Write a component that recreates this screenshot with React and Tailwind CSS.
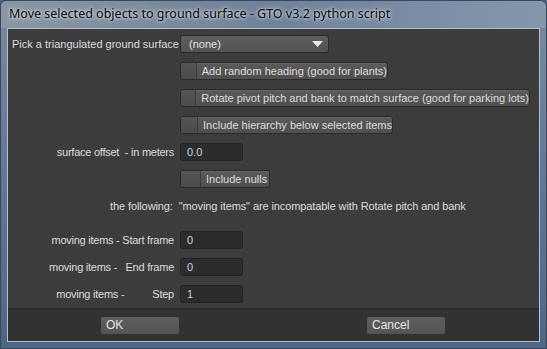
import React from "react";

const font = { fontFamily: '"Liberation Sans", Arial, sans-serif' };

function Check({ label, w }) {
  return (
    <div className={`flex h-[18px] ${w} rounded-[3px] border border-[#2a2a2a] bg-gradient-to-b from-[#5a5a5a] to-[#4f4f4f] shadow-[inset_0_1px_0_rgba(255,255,255,0.08)]`}>
      <div className="w-[20px] border-r border-[#3a3a3a] bg-gradient-to-b from-[#555] to-[#4a4a4a] rounded-l-[3px]" />
      <div className="flex items-center pl-[5px] text-[11px] text-[#dedede] leading-none whitespace-nowrap">{label}</div>
    </div>
  );
}

function Input({ value }) {
  return (
    <div className="flex items-center h-[18px] w-[63px] rounded-[3px] border border-[#222] bg-[#2c2c2c] pl-[6px] text-[11px] text-[#c9d2de] leading-none">
      {value}
    </div>
  );
}

function Label({ children }) {
  return (
    <div className="w-[166px] text-right text-[11px] tracking-[-0.25px] text-[#dcdcdc] leading-none whitespace-pre">{children}</div>
  );
}

export default function App() {
  return (
    <div className="w-[547px] h-[349px] overflow-hidden bg-[#4b6283]" style={font}>
      <div className="w-[547px] h-[349px] rounded-t-[6px] bg-gradient-to-b from-[#7a8a9d] via-[#62789a] to-[#4f6585] flex flex-col border border-[#3a4659]">
        <div className="h-[27px] shrink-0 flex items-center pl-[8px] bg-gradient-to-r from-[#8a96a4] via-[#6f8299] to-[#8597ad] rounded-t-[6px]">
          <span
            className="text-[12.5px] text-black [text-shadow:0_0_5px_rgba(255,255,255,0.9),0_0_2px_rgba(255,255,255,0.7)]"
            style={{ fontFamily: '"Noto Sans", "Liberation Sans", sans-serif' }}
          >
            Move selected objects to ground surface - GTO v3.2 python script
          </span>
        </div>
        <div className="mx-[6px] h-[314px] border border-[#b4c0ce] flex flex-col bg-[#3c3c3c]">
          <div className="flex-1 flex flex-col pt-[6px] gap-[9px]">
            <div className="flex items-center gap-[6px] h-[18px]">
              <div className="w-[166px] pl-[4px] text-[11px] text-[#dcdcdc] leading-none whitespace-nowrap">
                Pick a triangulated ground surface
              </div>
              <div className="relative flex items-center h-[18px] w-[149px] rounded-[3px] border border-[#2a2a2a] bg-gradient-to-b from-[#5e5e5e] to-[#525252] pl-[8px] text-[11px] text-[#e2e2e2] leading-none">
                (none)
                <svg className="absolute right-[5px] top-[5px]" width="11" height="7" viewBox="0 0 11 7">
                  <polygon points="0,0 11,0 5.5,6" fill="#e6e6e6" />
                </svg>
              </div>
            </div>
            <div className="flex items-center h-[18px] pl-[172px]">
              <Check label="Add random heading (good for plants)" w="w-[208px]" />
            </div>
            <div className="flex items-center h-[18px] pl-[172px]">
              <Check label="Rotate pivot pitch and bank to match surface (good for parking lots)" w="w-[350px]" />
            </div>
            <div className="flex items-center h-[18px] pl-[172px]">
              <Check label="Include hierarchy below selected items" w="w-[213px]" />
            </div>
            <div className="flex items-center gap-[6px] h-[18px]">
              <Label>{"surface offset  - in meters"}</Label>
              <Input value="0.0" />
            </div>
            <div className="flex items-center h-[18px] pl-[172px]">
              <Check label="Include nulls" w="w-[90px]" />
            </div>
            <div className="flex items-center h-[18px] pl-[102px] text-[11px] tracking-[-0.1px] text-[#dcdcdc] leading-none whitespace-pre">
              {'the following:  "moving items" are incompatable with Rotate pitch and bank'}
            </div>
            <div className="flex items-center gap-[6px] h-[18px] mt-[7px]">
              <Label>{"moving items - Start frame"}</Label>
              <Input value="0" />
            </div>
            <div className="flex items-center gap-[6px] h-[18px]">
              <Label>{"moving items -   End frame"}</Label>
              <Input value="0" />
            </div>
            <div className="flex items-center gap-[6px] h-[18px]">
              <Label>{"moving items -          Step"}</Label>
              <Input value="1" />
            </div>
          </div>
          <div className="h-[33px] shrink-0 border-t border-[#262626] bg-[#323232] flex items-center">
            <div className="ml-[93px] flex items-center h-[17px] w-[78px] rounded-[2px] bg-gradient-to-b from-[#5e5e5e] to-[#545454] pl-[5px] text-[12px] text-[#e6e6e6] leading-none">OK</div>
            <div className="ml-[188px] flex items-center h-[17px] w-[78px] rounded-[2px] bg-gradient-to-b from-[#5e5e5e] to-[#545454] pl-[5px] text-[12px] text-[#e6e6e6] leading-none">Cancel</div>
          </div>
        </div>
      </div>
    </div>
  );
}
